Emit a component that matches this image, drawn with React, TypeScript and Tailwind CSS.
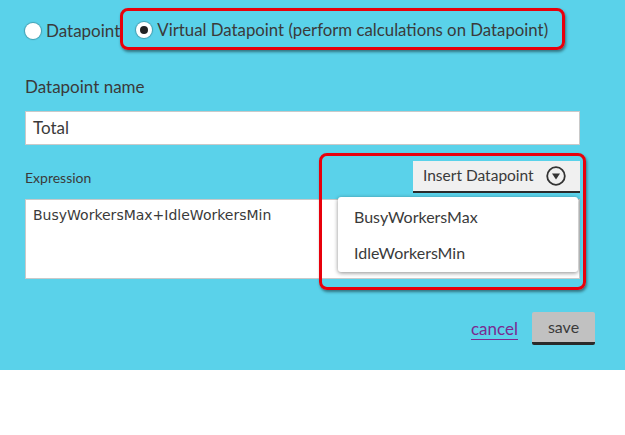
import { useState } from "react";

const font = { fontFamily: "Lato, 'Open Sans', sans-serif" };

const Radio = ({ checked }: { checked: boolean }) => (
  <span className="flex h-[16px] w-[16px] items-center justify-center rounded-full bg-white shadow-[0_0_1px_1px_rgba(0,0,0,0.25)]">
    {checked && <span className="h-[8px] w-[8px] rounded-full bg-[#222]" />}
  </span>
);

const ArrowCircle = () => (
  <svg width="20" height="20" viewBox="0 0 20 20" fill="none">
    <circle cx="10" cy="10" r="8.8" stroke="#333" strokeWidth="1.8" />
    <path d="M6 7.5h8l-4 6z" fill="#333" />
  </svg>
);

export default function App() {
  const [mode] = useState("virtual");

  return (
    <div className="h-[435px] w-[625px] bg-white text-[#3a3a3a]" style={font}>
      <div className="flex h-[370px] flex-col bg-[#5ad2ea] pl-[25px] pr-[45px]">
        {/* type selector */}
        <div className="mt-[22px] flex items-center text-[17px] leading-none">
          <label className="flex items-center gap-[5px]">
            <Radio checked={mode === "plain"} />
            <span>Datapoint</span>
          </label>
          <label className="relative ml-[16px] flex items-center gap-[5px]">
            <span className="pointer-events-none absolute -bottom-[11px] -left-[16px] -right-[17px] -top-[14px] rounded-[8px] border-[3px] border-[#e8000b] shadow-[1px_2px_3px_rgba(0,0,0,0.45)]" />
            <Radio checked={mode === "virtual"} />
            <span className="text-[16.8px]">Virtual Datapoint (perform calculations on Datapoint)</span>
          </label>
        </div>

        <div className="mt-[39px] text-[17px] leading-none">Datapoint name</div>
        <div className="mt-[16px] flex h-[34px] items-center border border-[#c9c9c9] bg-white px-[7px] text-[17px]">
          Total
        </div>

        {/* expression row */}
        <div className="relative mt-[8px]">
          <span className="pointer-events-none absolute left-[294px] top-0 h-[137px] w-[267px] rounded-[8px] border-[3px] border-[#e8000b] shadow-[1px_2px_3px_rgba(0,0,0,0.45)]" />
          <div className="flex items-end justify-between">
            <span className="mb-[8px] text-[14px] leading-none">Expression</span>
            <button className="mt-[8px] flex h-[32px] w-[167px] items-center gap-[12px] border-b-2 border-[#2a2a2a] bg-[#f0f0f0] pl-[10px] text-[15.5px]">
              <span>Insert Datapoint</span>
              <ArrowCircle />
            </button>
          </div>
          <div
            className="mt-[6px] h-[80px] border border-[#c9c9c9] bg-white px-[7px] pt-[5px] text-[14px]"
            style={{ fontFamily: "'DejaVu Sans', Verdana, sans-serif" }}
          >
            BusyWorkersMax+IdleWorkersMin
          </div>
          <div className="absolute left-[313px] top-[44px] w-[240px] rounded-[3px] bg-white text-[16px] shadow-[0_1px_4px_rgba(0,0,0,0.45)]">
            <div className="flex h-[37px] items-center px-[16px] pt-[2px]">BusyWorkersMax</div>
            <div className="flex h-[38px] items-center px-[16px]">IdleWorkersMin</div>
          </div>
        </div>

        <div className="-mr-[15px] mt-[33px] flex items-center justify-end gap-[14px]">
          <a href="#" className="text-[17px] text-[#7b2a90] underline decoration-1 underline-offset-[4px]">
            cancel
          </a>
          <button className="h-[33px] w-[63px] rounded-[2px] border-b-[3px] border-[#2a2a2a] bg-[#c1c1c1] text-[16px]">
            save
          </button>
        </div>
      </div>
    </div>
  );
}
